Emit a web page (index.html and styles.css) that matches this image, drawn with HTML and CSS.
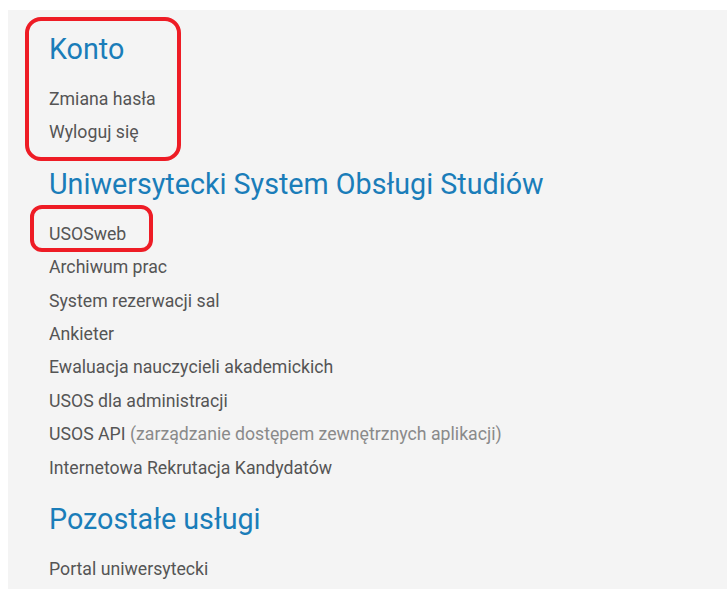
FILE: index.html
```html
<!DOCTYPE html>
<html lang="pl">
<head>
<meta charset="utf-8">
<title>USOS – usługi</title>
<link rel="stylesheet" href="styles.css">
</head>
<body>
<div class="panel">
  <section class="group">
    <h2 class="group-title">Konto</h2>
    <ul class="links">
      <li><a href="#">Zmiana hasła</a></li>
      <li><a href="#">Wyloguj się</a></li>
    </ul>
  </section>
  <section class="group">
    <h2 class="group-title">Uniwersytecki System Obsługi Studiów</h2>
    <ul class="links">
      <li><a href="#">USOSweb</a></li>
      <li><a href="#">Archiwum prac</a></li>
      <li><a href="#">System rezerwacji sal</a></li>
      <li><a href="#">Ankieter</a></li>
      <li><a href="#">Ewaluacja nauczycieli akademickich</a></li>
      <li><a href="#">USOS dla administracji</a></li>
      <li><a href="#">USOS API <span class="note">(zarządzanie dostępem zewnętrznych aplikacji)</span></a></li>
      <li><a href="#">Internetowa Rekrutacja Kandydatów</a></li>
    </ul>
  </section>
  <section class="group">
    <h2 class="group-title">Pozostałe usługi</h2>
    <ul class="links">
      <li><a href="#">Portal uniwersytecki</a></li>
    </ul>
  </section>
  <div class="mark mark-konto"></div>
  <div class="mark mark-usosweb"></div>
</div>
</body>
</html>
```
FILE: styles.css
```css
html, body {
  margin: 0;
  padding: 0;
  background: #ffffff;
  height: 100%;
  overflow: hidden;
}

body {
  font-family: Roboto, "Liberation Sans", sans-serif;
}

.panel {
  position: relative;
  box-sizing: border-box;
  height: 579px;
  margin: 10px 0 0 8px;
  padding: 22px 0 0 41px;
  background: #f4f4f4;
}

.group-title {
  margin: 0 0 17px;
  font-size: 28.7px;
  line-height: 34px;
  font-weight: 400;
  color: #1a7db9;
  white-space: nowrap;
}

.group + .group .group-title {
  margin-top: 17px;
}

.links {
  list-style: none;
  margin: 0;
  padding: 0;
}

.links li {
  font-size: 17.7px;
  line-height: 33.4px;
  white-space: nowrap;
}

.links a {
  color: #555555;
  text-decoration: none;
}

.links .note {
  color: #8a8a8a;
}

/* red highlight frames */
.mark {
  position: absolute;
  border: 4px solid #ee1c25;
  border-radius: 16px;
  pointer-events: none;
}

.mark-konto {
  left: 17px;
  top: 7px;
  width: 148px;
  height: 136px;
}

.mark-usosweb {
  left: 22px;
  top: 195px;
  width: 115px;
  height: 39px;
  border-radius: 12px;
}
```
